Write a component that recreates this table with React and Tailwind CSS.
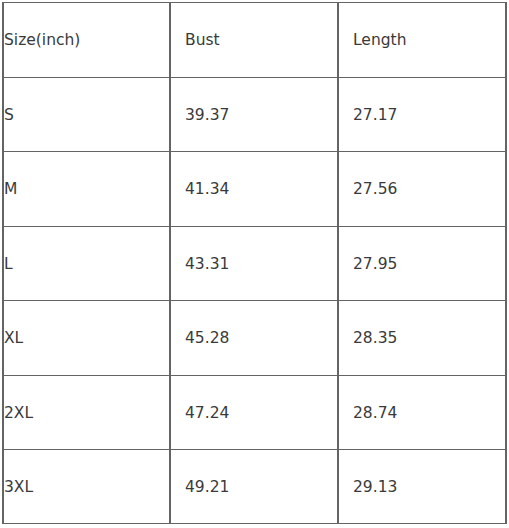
import React from 'react';

const rows = [
  ['Size(inch)', 'Bust', 'Length'],
  ['S', '39.37', '27.17'],
  ['M', '41.34', '27.56'],
  ['L', '43.31', '27.95'],
  ['XL', '45.28', '28.35'],
  ['2XL', '47.24', '28.74'],
  ['3XL', '49.21', '29.13'],
];

const heights = ['h-[75px]', 'h-[74px]', 'h-[75px]', 'h-[74px]', 'h-[75px]', 'h-[74px]', 'h-[74px]'];

export default function App() {
  return (
    <div className="bg-white w-[509px] h-[528px] pt-[2px] pl-[2px]" style={{ fontFamily: '"DejaVu Sans", Verdana, sans-serif' }}>
      <div className="w-[505px] border-l-2 border-t border-[#646464] text-[15.5px] text-[#3a3a3a]">
        {rows.map((r, i) => (
          <div key={i} className={`flex ${heights[i]}`}>
            <div className="w-[167px] border-r-2 border-b border-[#646464] flex items-center pt-[2px]">{r[0]}</div>
            <div className="w-[168px] border-r-2 border-b border-[#646464] flex items-center pt-[2px] pl-[14px]">{r[1]}</div>
            <div className="w-[168px] border-r-2 border-b border-[#646464] flex items-center pt-[2px] pl-[14px]">{r[2]}</div>
          </div>
        ))}
      </div>
    </div>
  );
}
